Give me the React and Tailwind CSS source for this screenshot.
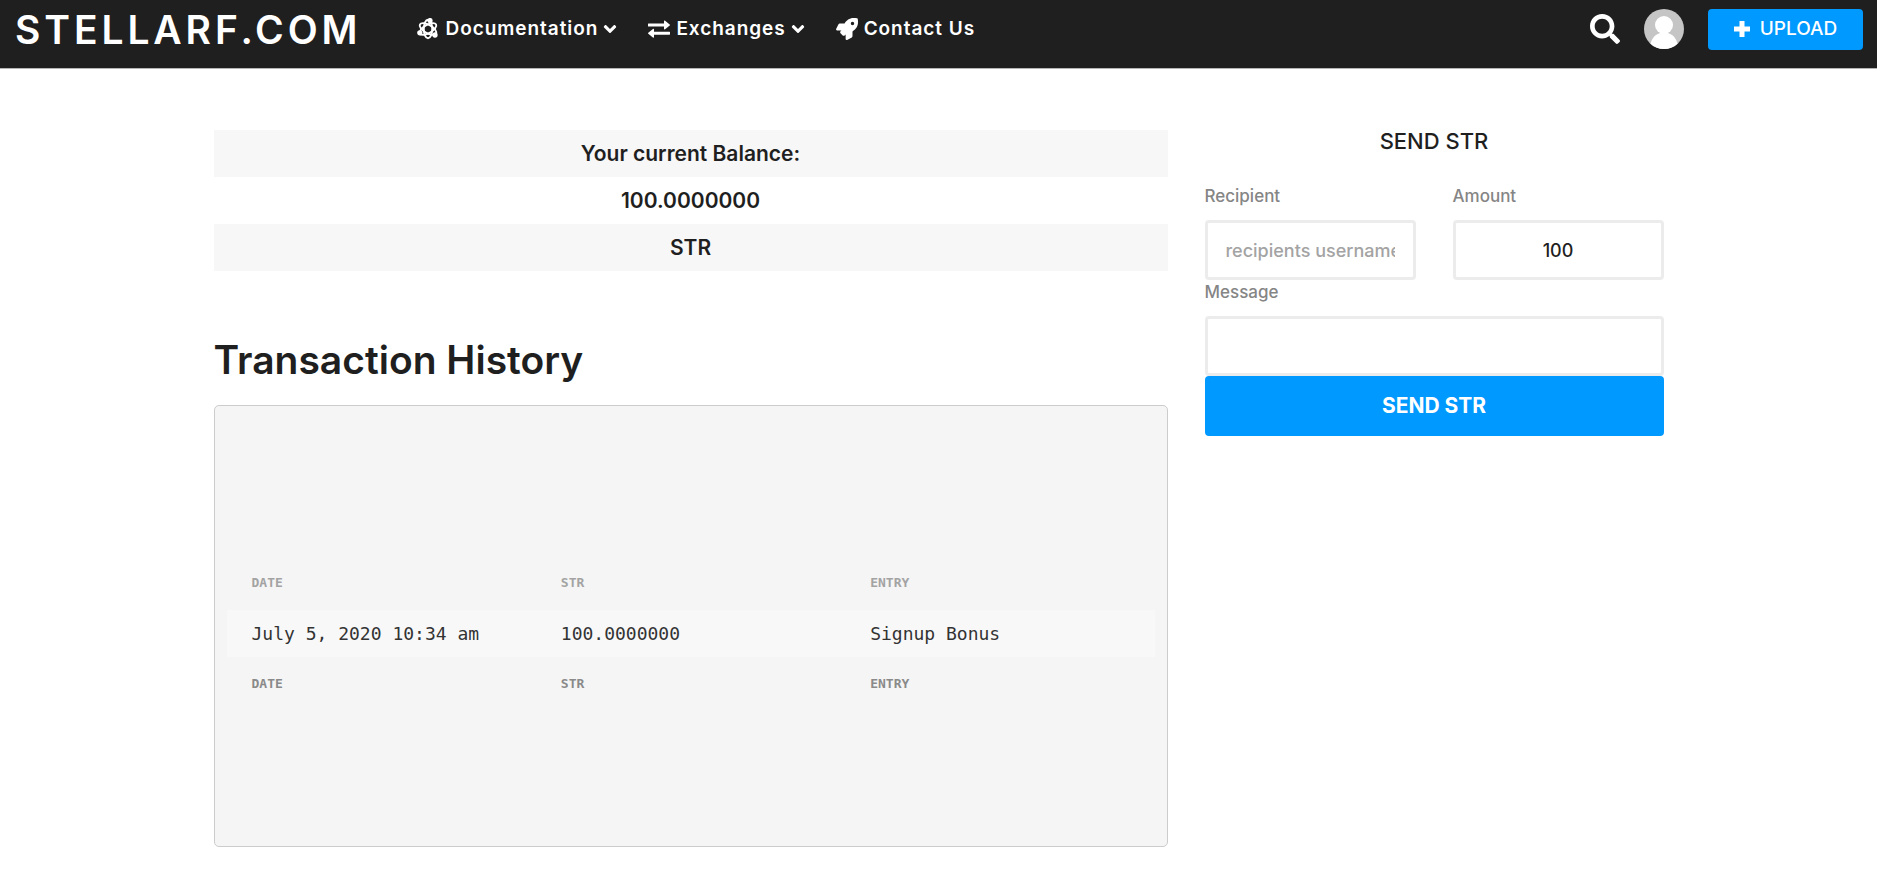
import React, { useState } from 'react';
import { FaAngleDown, FaRocket, FaSearch } from 'react-icons/fa';

const AtomIcon = () => (
  <svg viewBox="0 0 22 22" className="w-[22px] h-[22px]" fill="none" stroke="currentColor" strokeWidth="1.9">
    <ellipse cx="11" cy="11" rx="4.2" ry="9.3" />
    <ellipse cx="11" cy="11" rx="4.2" ry="9.3" transform="rotate(60 11 11)" />
    <ellipse cx="11" cy="11" rx="4.2" ry="9.3" transform="rotate(120 11 11)" />
    <circle cx="13" cy="2.6" r="1.7" fill="currentColor" />
    <circle cx="2.8" cy="14.8" r="1.7" fill="currentColor" />
    <circle cx="18" cy="17" r="1.7" fill="currentColor" />
  </svg>
);

const ExchangeIcon = () => (
  <svg viewBox="0 0 22 22" className="w-[22px] h-[22px]" fill="currentColor">
    <path d="M.5 5.500h15.500V3.300c0-.6.6-.9 1.100-.5l4.600 3.700c.4.3.4.8 0 1.100l-4.600 3.700c-.5.4-1.100.1-1.100-.5V8.600H.5a.5.5 0 0 1-.5-.5V6c0-.3.2-.5.5-.5z" />
    <path d="M21.500 13.700H6v-2.200c0-.6-.6-.9-1.100-.5L.3 14.700c-.4.3-.4.8 0 1.100l4.600 3.700c.5.4 1.100.1 1.100-.5v-2.200h15.500c.3 0 .5-.2.5-.5v-2.100c0-.3-.2-.5-.5-.5z" />
  </svg>
);

const PlusIcon = () => (
  <svg viewBox="0 0 16 16" className="w-4 h-4" fill="none" stroke="currentColor" strokeWidth="5">
    <path d="M8 0v16M0 8h16" />
  </svg>
);

const Avatar = () => (
  <svg viewBox="0 0 40 40" className="w-10 h-10 rounded-full">
    <rect width="40" height="40" fill="#c5c5c5" />
    <circle cx="20" cy="16" r="9" fill="#fff" />
    <path d="M6 40c0-9 4-14 10-16h8c6 2 10 7 10 16z" fill="#fff" />
  </svg>
);

const navItems = [
  { title: 'Documentation', icon: <AtomIcon />, hasMenu: true },
  { title: 'Exchanges', icon: <ExchangeIcon />, hasMenu: true },
  { title: 'Contact Us', icon: <FaRocket className="w-[22px] h-[22px]" />, hasMenu: false },
];

const columns = ['DATE', 'STR', 'ENTRY'];

const transactions = [
  { id: 1, date: 'July 5, 2020 10:34 am', amount: '100.0000000', entry: 'Signup Bonus' },
];

const fieldClass = 'block w-full h-[60px] rounded border-[3px] border-[#ececec] bg-white px-[18px] text-lg font-medium text-[#1f1f1f] placeholder:text-[#a3a3a3] outline-none';
const labelClass = 'block text-[17px] leading-6 font-medium text-[#858585]';

const Header = () => (
  <header className="bg-[#1f1f1f] h-[69px] border-b border-[#b5b5b5] text-white">
    <div className="flex items-center h-[58px] pl-[15px] pr-[14px]">
      <a href="#" className="text-[39px] leading-none font-semibold tracking-widest">STELLARF.COM</a>
      <nav className="flex items-center gap-7 ml-14">
        {navItems.map(item => (
          <a key={item.title} href="#" className="flex items-center text-[19px] leading-[30px] font-semibold tracking-wider">
            {item.icon}
            <span className="ml-1.5">{item.title}</span>
            {item.hasMenu && <FaAngleDown className="w-5 h-5 ml-0.5" />}
          </a>
        ))}
      </nav>
      <div className="flex items-center ml-auto">
        <button type="button" aria-label="Search"><FaSearch className="w-[30px] h-[30px]" /></button>
        <a href="#" aria-label="Profile" className="ml-6"><Avatar /></a>
        <button type="button" className="flex items-center justify-center gap-2.5 w-[155px] h-[41px] ml-6 rounded bg-[#0099ff] text-[19px] leading-[30px] font-medium">
          <PlusIcon />
          UPLOAD
        </button>
      </div>
    </div>
  </header>
);

const Balance = () => (
  <div className="text-center text-[21px] leading-[47px] font-semibold">
    <p className="bg-[#f7f7f7]">Your current Balance:</p>
    <p>100.0000000</p>
    <p className="bg-[#f7f7f7]">STR</p>
  </div>
);

const History = () => (
  <section>
    <h2 className="mt-16 text-[39px] leading-[50px] font-semibold">Transaction History</h2>
    <div className="mt-5 pt-[150px] pb-[135px] px-3 rounded-[5px] border border-[#cccccc] bg-[#f5f5f5] font-['DejaVu_Sans_Mono',monospace]">
      <table className="w-full table-fixed text-left">
        <thead>
          <tr className="h-[54px] text-[13px] text-[#a3a3a3]">
            {columns.map(col => <th key={col} className="pl-[25px]">{col}</th>)}
          </tr>
        </thead>
        <tbody>
          {transactions.map(t => (
            <tr key={t.id} className="h-[47px] bg-[#f8f8f8] text-lg text-[#333333]">
              <td className="pl-[25px]">{t.date}</td>
              <td className="pl-[25px]">{t.amount}</td>
              <td className="pl-[25px]">{t.entry}</td>
            </tr>
          ))}
        </tbody>
        <tfoot>
          <tr className="h-[54px] text-[13px] text-[#8a8a8a]">
            {columns.map(col => <th key={col} className="pl-[25px]">{col}</th>)}
          </tr>
        </tfoot>
      </table>
    </div>
  </section>
);

const SendForm = () => {
  const [recipient, setRecipient] = useState('');
  const [amount, setAmount] = useState('100');
  const [message, setMessage] = useState('');

  return (
    <form onSubmit={e => e.preventDefault()}>
      <h3 className="text-center text-[22px] leading-[22px] font-medium">SEND STR</h3>
      <div className="grid grid-cols-2 gap-[37px] mt-8">
        <div>
          <label htmlFor="recipient" className={labelClass}>Recipient</label>
          <input id="recipient" type="text" placeholder="recipients username" value={recipient} onChange={e => setRecipient(e.target.value)} className={`${fieldClass} mt-3`} />
        </div>
        <div>
          <label htmlFor="amount" className={labelClass}>Amount</label>
          <input id="amount" type="text" value={amount} onChange={e => setAmount(e.target.value)} className={`${fieldClass} mt-3 text-center`} />
        </div>
      </div>
      <label htmlFor="message" className={labelClass}>Message</label>
      <input id="message" type="text" value={message} onChange={e => setMessage(e.target.value)} className={`${fieldClass} mt-3`} />
      <button type="submit" className="block w-full h-[60px] rounded bg-[#0099ff] text-white text-[21px] font-bold">SEND STR</button>
    </form>
  );
};

const App = () => (
  <div className="min-h-screen bg-white text-[#1f1f1f] font-['Inter',sans-serif]">
    <Header />
    <main className="flex gap-[37px] max-w-[1450px] mx-auto pt-[61px]">
      <div className="flex-1 min-w-0">
        <Balance />
        <History />
      </div>
      <aside className="w-[459px]">
        <SendForm />
      </aside>
    </main>
  </div>
);

export default App;
